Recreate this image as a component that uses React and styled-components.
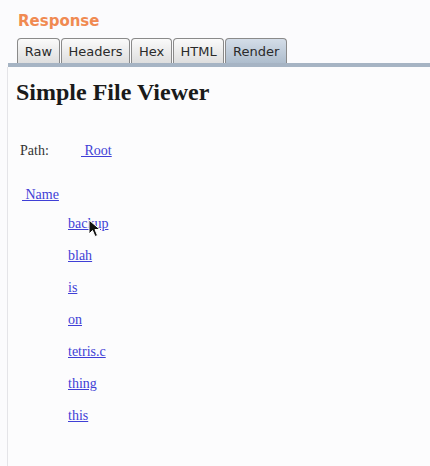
import React from "react";
import styled, { createGlobalStyle } from "styled-components";

const GlobalStyle = createGlobalStyle`
  html, body {
    margin: 0;
    padding: 0;
    background: #f3f3f5;
  }
`;

const tabs = ["Raw", "Headers", "Hex", "HTML", "Render"];
const files = ["backup", "blah", "is", "on", "tetris.c", "thing", "this"];

const App = () => {
  return (
    <Page>
      <GlobalStyle />
      <Title>Response</Title>
      <TabBar>
        {tabs.map((t) => (
          <Tab key={t} active={t === "Render"}>
            {t}
          </Tab>
        ))}
      </TabBar>
      <Panel>
        <Heading>Simple File Viewer</Heading>
        <PathRow>
          <Label>Path:</Label>
          <Link href="#">&nbsp;Root</Link>
        </PathRow>
        <NameRow>
          <Link href="#">&nbsp;Name</Link>
        </NameRow>
        <FileList>
          {files.map((f, i) => (
            <FileRow key={f}>
              <Link href="#">{f}</Link>
              {i === 0 && <Pointer />}
            </FileRow>
          ))}
        </FileList>
      </Panel>
    </Page>
  );
};

const Pointer = () => (
  <Cursor width="13" height="19" viewBox="0 0 13 19">
    <path
      d="M1 1 L1 15 L4.5 11.5 L7 17.5 L9.5 16.5 L7 10.5 L12 10.5 Z"
      fill="#111"
      stroke="#fff"
      strokeWidth="1"
      strokeLinejoin="round"
    />
  </Cursor>
);

const Page = styled.div`
  width: 430px;
  height: 466px;
  display: flex;
  flex-direction: column;
  background: #fbfbfd;
  overflow: hidden;
`;

const Title = styled.div`
  padding: 12px 0 0 18px;
  height: 28px;
  box-sizing: border-box;
  font-family: "DejaVu Sans", sans-serif;
  font-weight: bold;
  font-size: 15px;
  color: #f08a52;
`;

const TabBar = styled.div`
  display: flex;
  align-items: flex-end;
  margin-left: 8px;
  padding-left: 9px;
  height: 39px;
  padding-top: 11px;
  box-sizing: border-box;
  border-bottom: 4px solid #a6b4c4;
  box-shadow: 0 1px 0 #7f8e9e;
`;

const Tab = styled.div`
  height: 25px;
  box-sizing: border-box;
  padding: 0 6.7px;
  margin-right: 1px;
  display: flex;
  align-items: center;
  font-family: "DejaVu Sans", sans-serif;
  font-size: 13px;
  color: #2a2a2a;
  border: 1px solid #8a8a8a;
  border-bottom: none;
  border-radius: 4px 4px 0 0;
  background: ${(p) =>
    p.active
      ? "linear-gradient(#d4dde8, #aebdcd)"
      : "linear-gradient(#fafafa, #dedede)"};
`;

const Panel = styled.div`
  flex: 1;
  margin-left: 7px;
  border-left: 1px solid #e4e4e8;
  background: #fcfcfd;
  padding: 11px 0 0 8px;
  font-family: "Liberation Serif", "Times New Roman", serif;
  font-size: 14px;
  color: #333;
`;

const Heading = styled.h1`
  margin: 0;
  font-size: 24px;
  line-height: 28px;
  font-weight: bold;
  color: #1a1a1a;
`;

const PathRow = styled.div`
  display: flex;
  margin-top: 35px;
  padding-left: 4px;
  line-height: 20px;
`;

const Label = styled.span`
  width: 61px;
`;

const NameRow = styled.div`
  margin-top: 24px;
  padding-left: 6px;
  line-height: 20px;
`;

const FileList = styled.div`
  display: flex;
  flex-direction: column;
  padding-left: 52px;
  margin-top: 9px;
`;

const FileRow = styled.div`
  position: relative;
  height: 32px;
  line-height: 20px;
`;

const Link = styled.a`
  color: #3f3fd6;
  text-decoration: underline;
`;

const Cursor = styled.svg`
  position: absolute;
  left: 20px;
  top: 5px;
`;

export default App;
